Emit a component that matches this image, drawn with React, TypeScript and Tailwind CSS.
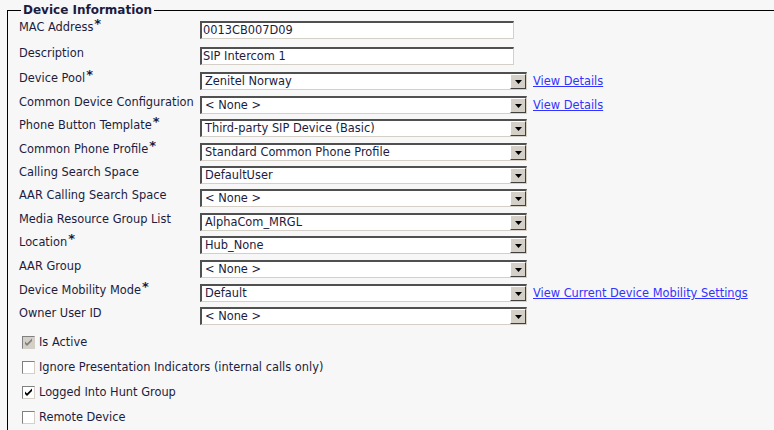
import React from "react";

type Row = {
  label: string;
  req?: boolean;
  kind: "text" | "select";
  value: string;
  link?: string;
  gap: string;
};

const rows: Row[] = [
  { label: "MAC Address", req: true, kind: "text", value: "0013CB007D09", gap: "mt-0" },
  { label: "Description", kind: "text", value: "SIP Intercom 1", gap: "mt-[8px]" },
  { label: "Device Pool", req: true, kind: "select", value: "Zenitel Norway", link: "View Details", gap: "mt-[7px]" },
  { label: "Common Device Configuration", kind: "select", value: "< None >", link: "View Details", gap: "mt-[6px]" },
  { label: "Phone Button Template", req: true, kind: "select", value: "Third-party SIP Device (Basic)", gap: "mt-[5px]" },
  { label: "Common Phone Profile", req: true, kind: "select", value: "Standard Common Phone Profile", gap: "mt-[6px]" },
  { label: "Calling Search Space", kind: "select", value: "DefaultUser", gap: "mt-[5px]" },
  { label: "AAR Calling Search Space", kind: "select", value: "< None >", gap: "mt-[5px]" },
  { label: "Media Resource Group List", kind: "select", value: "AlphaCom_MRGL", gap: "mt-[6px]" },
  { label: "Location", req: true, kind: "select", value: "Hub_None", gap: "mt-[5px]" },
  { label: "AAR Group", kind: "select", value: "< None >", gap: "mt-[6px]" },
  { label: "Device Mobility Mode", req: true, kind: "select", value: "Default", link: "View Current Device Mobility Settings", gap: "mt-[6px]" },
  { label: "Owner User ID", kind: "select", value: "< None >", gap: "mt-[5px]" },
];

const checks = [
  { label: "Is Active", checked: true, disabled: true },
  { label: "Ignore Presentation Indicators (internal calls only)", checked: false },
  { label: "Logged Into Hunt Group", checked: true },
  { label: "Remote Device", checked: false },
];

function Field({ row }: { row: Row }) {
  const isSelect = row.kind === "select";
  return (
    <div
      className={`flex h-[18px] ${isSelect ? "w-[327px]" : "w-[314px]"} border-t-2 border-l-2 border-t-[#505050] border-l-[#505050] border-r border-b border-r-[#d4d0c8] border-b-[#d4d0c8] bg-white`}
    >
      <div className={`flex-1 truncate leading-[15px] ${isSelect ? "pl-[3px]" : "pl-[1px]"}`}>
        {row.value}
      </div>
      {isSelect && (
        <div className="flex h-[15px] w-[16px] items-center justify-center border border-t-white border-l-white border-r-[#404040] border-b-[#404040] bg-[#d4d0c8]">
          <svg width="7" height="4" viewBox="0 0 7 4">
            <path d="M0 0h7L3.5 4z" fill="#000" />
          </svg>
        </div>
      )}
    </div>
  );
}

function Box({ checked, disabled }: { checked: boolean; disabled?: boolean }) {
  return (
    <div
      className={`flex h-[13px] w-[13px] items-center justify-center border border-t-[#808080] border-l-[#808080] border-r-[#d4d0c8] border-b-[#d4d0c8] ${disabled ? "bg-[#d4d0c8]" : "bg-white"}`}
    >
      {checked && (
        <svg width="9" height="9" viewBox="0 0 9 9">
          <path d="M1 3.5l2 2L8 0.5v2.5L3 8 1 6z" fill={disabled ? "#808080" : "#000"} />
        </svg>
      )}
    </div>
  );
}

export default function App() {
  return (
    <div className="h-[430px] w-[774px] overflow-hidden bg-[#f7f7f7] pl-[7px] pt-[3px] font-['DejaVu_Sans',Verdana,sans-serif] text-[11.4px] text-[#1c1c40]">
      <fieldset className="h-[500px] w-[800px] border border-black pl-[11px] pt-[4px]">
        <legend className="ml-[2px] px-[2px] text-[12px] font-bold leading-[14px] text-[#1c1c40]">
          Device Information
        </legend>
        <div className="flex flex-col">
          {rows.map((r) => (
            <div key={r.label} className={`flex items-start ${r.gap}`}>
              <div className="w-[181px] shrink-0 whitespace-nowrap leading-[14px] -mt-[1px]">
                {r.label}
                {r.req && <span className="relative -top-[3px] ml-[1px] text-[13px] font-bold">*</span>}
              </div>
              <Field row={r} />
              {r.link && (
                <a href="#" className="ml-[6px] leading-[18px] text-[#3333ff] underline">
                  {r.link}
                </a>
              )}
            </div>
          ))}
        </div>
        <div className="mt-[11px] flex flex-col gap-[12px] pl-[3px]">
          {checks.map((c) => (
            <div key={c.label} className="flex items-center gap-[4px]">
              <Box checked={c.checked} disabled={c.disabled} />
              <span className="leading-[13px]">{c.label}</span>
            </div>
          ))}
        </div>
      </fieldset>
    </div>
  );
}
